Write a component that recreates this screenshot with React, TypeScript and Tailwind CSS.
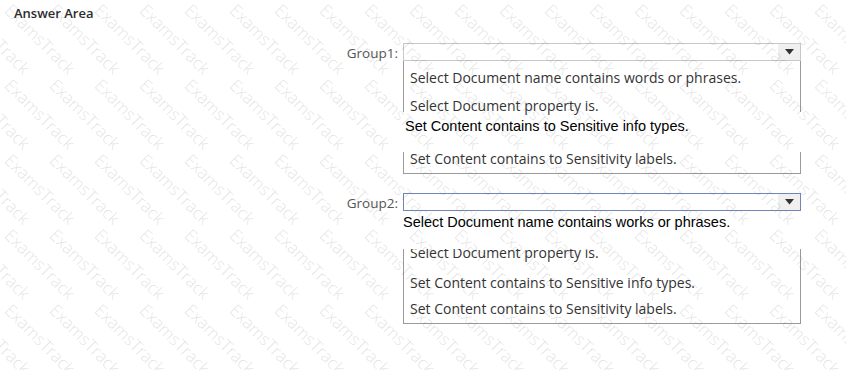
import React from 'react';

const segoe = { fontFamily: '"Open Sans", "Noto Sans", sans-serif' };
const arial = { fontFamily: '"Liberation Sans", Arial, sans-serif' };

// watermark grid: 20 columns x 6 rows
const marks = Array.from({ length: 20 * 6 });

const Arrow = () => (
  <div className="flex h-full w-[22px] items-center justify-center bg-[#f0f0f0]">
    <svg width="9" height="6" viewBox="0 0 9 6">
      <path d="M0 0 L9 0 L4.5 5.5 Z" fill="#333" />
    </svg>
  </div>
);

const Item: React.FC<{ children: React.ReactNode; className?: string }> = ({ children, className = '' }) => (
  <div className={`pl-[6px] text-[14px] leading-[18px] text-[#333] ${className}`} style={segoe}>
    {children}
  </div>
);

export default function App() {
  return (
    <div className="relative h-[370px] w-[846px] overflow-hidden bg-white">
      <div className="pl-[14px] pt-[4px] text-[13px] font-semibold text-[#2b2b2b]" style={segoe}>
        Answer Area
      </div>

      {/* Group1 */}
      <div className="mt-[19px] flex">
        <div className="w-[403px] pr-[5px] pt-[1px] text-right text-[13.5px] leading-[18px] text-[#555]" style={segoe}>
          Group1:
        </div>
        <div className="w-[398px]">
          <div className="flex h-[18px] border border-[#c8c8c8] justify-end">
            <Arrow />
          </div>
          <div className="border-x border-[#9a9a9a] pt-[8px] h-[51px]">
            <Item>Select Document name contains words or phrases.</Item>
            <Item className="mt-[10px]">Select Document property is.</Item>
          </div>
          <div className="h-[40px] pl-[2px] pt-[5px] text-[14.5px] leading-[18px] text-black" style={arial}>
            Set Content contains to Sensitive info types.
          </div>
          <div className="h-[22px] border-x border-b border-[#9a9a9a] overflow-hidden">
            <Item className="-mt-[2px]">Set Content contains to Sensitivity labels.</Item>
          </div>
        </div>
      </div>

      {/* Group2 */}
      <div className="mt-[19px] flex">
        <div className="w-[403px] pr-[5px] pt-[1px] text-right text-[13.5px] leading-[18px] text-[#555]" style={segoe}>
          Group2:
        </div>
        <div className="w-[398px]">
          <div className="flex h-[18px] border border-[#6f86b8] justify-end">
            <Arrow />
          </div>
          <div className="h-[38px] pt-[2px] text-[14.5px] leading-[18px] text-black" style={arial}>
            Select Document name contains works or phrases.
          </div>
          <div className="h-[75px] border-x border-b border-[#9a9a9a]">
            <div className="h-[13px] overflow-hidden">
              <Item className="-mt-[5px]">Select Document property is.</Item>
            </div>
            <Item className="mt-[12px]">Set Content contains to Sensitive info types.</Item>
            <Item className="mt-[8px]">Set Content contains to Sensitivity labels.</Item>
          </div>
        </div>
      </div>

      {/* watermark overlay */}
      <div className="pointer-events-none absolute -left-[28px] -top-[2px] grid grid-cols-[repeat(20,45px)] grid-rows-[repeat(6,75px)]">
        {marks.map((_, i) => (
          <div key={i} className="relative h-[75px] w-[45px]">
            <span
              className="absolute left-0 top-0 origin-top-left rotate-45 whitespace-nowrap text-[17px] font-light text-[rgba(110,110,110,0.2)]"
              style={segoe}
            >
              ExamsTrack
            </span>
          </div>
        ))}
      </div>
    </div>
  );
}
